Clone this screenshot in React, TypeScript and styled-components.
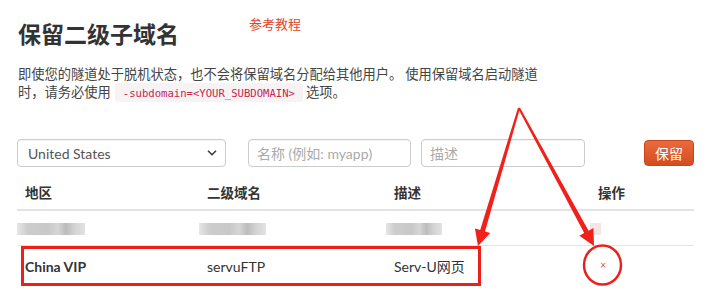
import React from "react";
import styled, { createGlobalStyle } from "styled-components";
import { ChevronDown } from "lucide-react";

const Global = createGlobalStyle`
  html, body { margin: 0; padding: 0; background: #fff; }
  body { font-family: Lato, "Noto Sans", "Noto Sans CJK SC", sans-serif; color: #333; }
  * { box-sizing: border-box; }
`;

const Page = styled.div`
  position: relative;
  width: 722px;
  height: 296px;
  overflow: hidden;
  padding: 14px 28px 0 17px;
`;

const HeaderRow = styled.div`
  display: flex;
  align-items: flex-start;
  gap: 70px;
`;

const Title = styled.h1`
  margin: 4px 0 0 1px;
  font-family: "Noto Sans CJK SC", sans-serif;
  font-size: 23px;
  line-height: 30px;
  font-weight: 700;
  color: #333;
`;

const TutorialLink = styled.a`
  font-family: "Noto Sans CJK SC", sans-serif;
  font-size: 13px;
  line-height: 20px;
  color: #e0452a;
  text-decoration: none;
`;

const Intro = styled.p`
  margin: 17px 0 0 1px;
  font-family: "Noto Sans CJK SC", sans-serif;
  font-size: 13.25px;
  line-height: 18px;
  color: #444;
`;

const Code = styled.code`
  margin: 0 3px 0 4px;
  padding: 4px 8px 3px;
  line-height: 13px;
  font-family: "DejaVu Sans Mono", monospace;
  font-size: 10.6px;
  color: #c7254e;
  background: #f7f3f4;
  border-radius: 3px;
`;

const FormRow = styled.div`
  display: flex;
  align-items: center;
  margin-top: 38px;
  height: 28px;
`;

const SelectBox = styled.div`
  width: 209px;
  height: 28px;
  border: 1px solid #ccc;
  border-radius: 4px;
  display: flex;
  align-items: center;
  justify-content: space-between;
  padding: 0 6px 0 10px;
  font-size: 14px;
  color: #555;
  box-shadow: inset 0 1px 1px rgba(0, 0, 0, 0.05);
`;

const TextInput = styled.input<{ $w: number; $ml: number }>`
  width: ${(p) => p.$w}px;
  margin-left: ${(p) => p.$ml}px;
  height: 28px;
  border: 1px solid #ccc;
  border-radius: 4px;
  padding: 0 8px;
  font-family: Lato, "Noto Sans CJK SC", sans-serif;
  font-size: 14px;
  color: #555;
  box-shadow: inset 0 1px 1px rgba(0, 0, 0, 0.05);
  &::placeholder { color: #aaa; }
`;

const SaveButton = styled.button`
  margin-left: 59px;
  width: 50px;
  height: 26px;
  border: 1px solid #c9461c;
  border-radius: 4px;
  background: linear-gradient(#ea6a3e, #d44c20);
  color: #fff;
  font-family: "Noto Sans CJK SC", sans-serif;
  font-size: 14px;
  padding: 0;
`;

const Table = styled.table`
  margin-top: 8px;
  width: 677px;
  border-collapse: collapse;
  table-layout: fixed;
`;

const Th = styled.th<{ $w: number }>`
  width: ${(p) => p.$w}px;
  text-align: left;
  height: 35px;
  padding: 0 8px;
  font-family: "Noto Sans CJK SC", sans-serif;
  font-size: 13.5px;
  font-weight: 700;
  color: #333;
  border-bottom: 2px solid #e3e3e3;
`;

const Td = styled.td<{ $bold?: boolean }>`
  height: 35px;
  padding: 0 8px;
  font-size: 14px;
  font-weight: ${(p) => (p.$bold ? 700 : 400)};
  color: #333;
  border-top: 1px solid #e3e3e3;
  font-family: Lato, "Noto Sans CJK SC", sans-serif;
`;

const TallTd = styled(Td)`
  height: 40px;
  padding-top: 2px;
`;

const Blur = styled.div<{ $w: number; $tint?: boolean }>`
  width: ${(p) => p.$w}px;
  height: 12px;
  margin-left: -8px;
  margin-top: 2px;
  background: ${(p) =>
    p.$tint
      ? "#f4e6e6"
      : "linear-gradient(90deg, #e6e6e6 0%, #cdcdcd 15%, #c8c8c8 45%, #d6d6d6 60%, #bcbcbc 72%, #d4d4d4 85%, #e2e2e2 100%)"};
  filter: blur(0.6px);
`;

const RemoveMark = styled.span`
  display: inline-block;
  margin-left: 2px;
  font-size: 11px;
  color: #d9603f;
  transform: translateY(-3px);
`;

const Overlay = styled.svg`
  position: absolute;
  left: 0;
  top: 0;
  pointer-events: none;
`;

export default function App() {
  return (
    <>
      <Global />
      <Page>
        <HeaderRow>
          <Title>保留二级子域名</Title>
          <TutorialLink href="#">参考教程</TutorialLink>
        </HeaderRow>
        <Intro>
          即使您的隧道处于脱机状态，也不会将保留域名分配给其他用户。 使用保留域名启动隧道
          <br />
          时，请务必使用<Code>-subdomain=&lt;YOUR_SUBDOMAIN&gt;</Code>选项。
        </Intro>
        <FormRow>
          <SelectBox>
            <span>United States</span>
            <ChevronDown size={14} strokeWidth={3} color="#444" />
          </SelectBox>
          <TextInput $w={163} $ml={22} placeholder="名称 (例如: myapp)" />
          <TextInput $w={164} $ml={10} placeholder="描述" />
          <SaveButton>保留</SaveButton>
        </FormRow>
        <Table>
          <thead>
            <tr>
              <Th $w={182}>地区</Th>
              <Th $w={187}>二级域名</Th>
              <Th $w={204}>描述</Th>
              <Th $w={104}>操作</Th>
            </tr>
          </thead>
          <tbody>
            <tr>
              <Td><Blur $w={68} /></Td>
              <Td><Blur $w={67} /></Td>
              <Td><Blur $w={56} /></Td>
              <Td><Blur $w={11} $tint /></Td>
            </tr>
            <tr>
              <TallTd $bold>China VIP</TallTd>
              <TallTd>servuFTP</TallTd>
              <TallTd>Serv-U网页</TallTd>
              <TallTd><RemoveMark>×</RemoveMark></TallTd>
            </tr>
          </tbody>
        </Table>
        <Overlay width="722" height="296" viewBox="0 0 722 296">
          <rect x="22.5" y="247.5" width="457" height="37" fill="none" stroke="#ec1f1a" strokeWidth="3" />
          <ellipse cx="602.5" cy="265" rx="18.5" ry="19.5" fill="none" stroke="#ec1f1a" strokeWidth="2.5" />
          <polygon
            fill="#f0201a"
            points="520,108.3 485,231.4 490.3,233 478,246 474.9,228.4 480.2,229.9 518,107.7"
          />
          <polygon
            fill="#f0201a"
            points="519.9,107.5 588.6,230.7 593.4,228.1 594,246 579.4,235.7 584.2,233.1 518.1,108.5"
          />
        </Overlay>
      </Page>
    </>
  );
}
